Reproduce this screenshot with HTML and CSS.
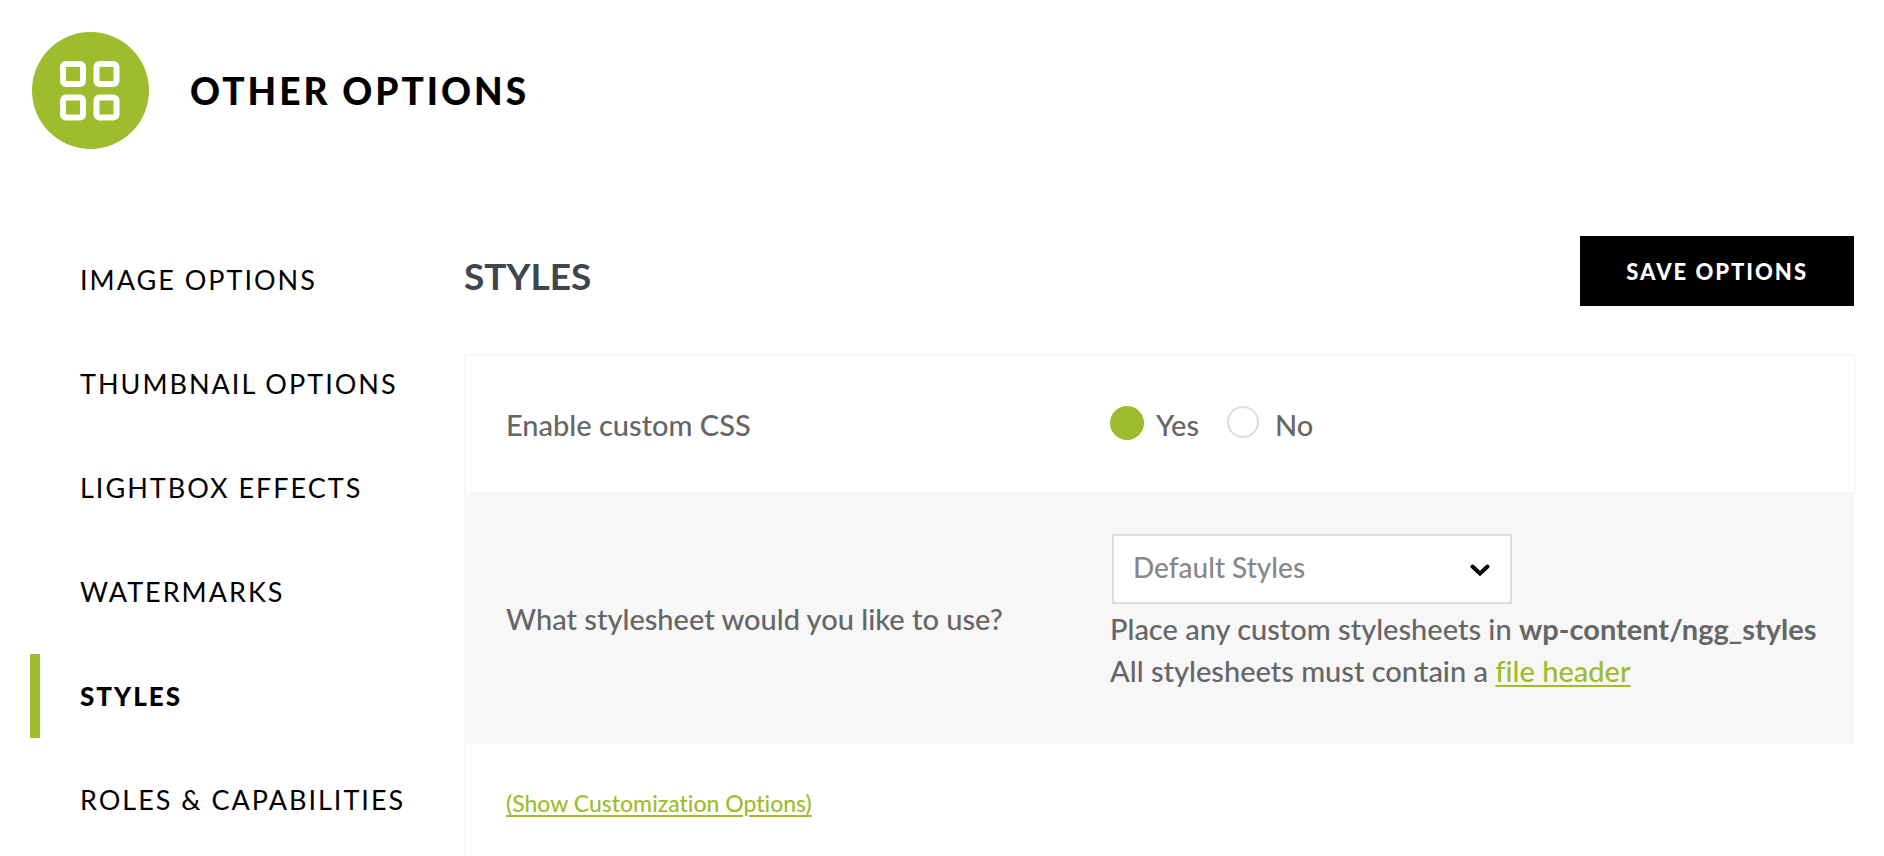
FILE: index.html
```
<!DOCTYPE html>
<html lang="en">
<head>
    <meta charset="UTF-8">
    <meta name="viewport" content="width=device-width, initial-scale=1.0">
    <title>Other Options</title>
    <link rel="stylesheet" href="styles.css">
</head>
<body>

    <header class="page-header">
        <svg class="page-icon" viewBox="0 0 117 117" aria-hidden="true">
            <circle cx="58.5" cy="58.5" r="58.5" fill="#9fbb2e"/>
            <g fill="none" stroke="#fff" stroke-width="6">
                <rect x="31" y="32" width="20" height="20" rx="3"/>
                <rect x="64.5" y="32" width="20" height="20" rx="3"/>
                <rect x="31" y="65.5" width="20" height="20" rx="3"/>
                <rect x="64.5" y="65.5" width="20" height="20" rx="3"/>
            </g>
        </svg>
        <h1>Other Options</h1>
    </header>

    <div class="page-body">
        <nav class="side-nav">
            <a href="#image">Image Options</a>
            <a href="#thumbnail">Thumbnail Options</a>
            <a href="#lightbox">Lightbox Effects</a>
            <a href="#watermarks">Watermarks</a>
            <a href="#styles" class="active">Styles</a>
            <a href="#roles">Roles &amp; Capabilities</a>
        </nav>

        <main>
            <form>
                <div class="section-header">
                    <h2>Styles</h2>
                    <button type="submit" class="save-button">Save Options</button>
                </div>

                <table class="options-table">
                    <tr class="radio-row">
                        <td class="label-cell" id="enableLabel">Enable custom CSS</td>
                        <td>
                            <div class="radio-group" role="radiogroup" aria-labelledby="enableLabel">
                                <input type="radio" name="activateCSS" id="cssYes" value="1" checked>
                                <label for="cssYes">Yes</label>
                                <input type="radio" name="activateCSS" id="cssNo" value="0">
                                <label for="cssNo">No</label>
                            </div>
                        </td>
                    </tr>
                    <tr class="shaded">
                        <td class="label-cell"><label for="stylesheet">What stylesheet would you like to use?</label></td>
                        <td>
                            <div class="select-wrap">
                                <select id="stylesheet">
                                    <option>Default Styles</option>
                                </select>
                                <svg class="chevron" viewBox="0 0 20 12" aria-hidden="true">
                                    <path d="M2.5 2.5 L10 9.5 L17.5 2.5" fill="none" stroke="#000" stroke-width="4" stroke-linecap="round"/>
                                </svg>
                            </div>
                            <p class="description">
                                Place any custom stylesheets in <strong>wp-content/ngg_styles</strong><br>
                                All stylesheets must contain a <a href="#header">file header</a>
                            </p>
                        </td>
                    </tr>
                    <tr class="more-row">
                        <td colspan="2"><a href="#customize">(Show Customization Options)</a></td>
                    </tr>
                </table>
            </form>
        </main>
    </div>

</body>
</html>
```

FILE: styles.css
```
:root {
    --green: #9fbb2e;
    --text: #666666;
    --heading: #40464d;
    --line: #f8f8f3;
    --field-border: #dddddd;
}

* {
    box-sizing: border-box;
}

body {
    font-family: Lato, sans-serif;
    font-size: 29px;
    font-weight: 500;
    font-variant-ligatures: none;
    line-height: 42px;
    color: var(--text);
    background-color: #ffffff;
    margin: 0;
    padding: 32px 30px 0;
}

a {
    color: var(--green);
    text-underline-offset: 3px;
    text-decoration-thickness: 2px;
}

/* Header */
.page-header {
    display: flex;
    align-items: center;
    gap: 41px;
    padding-left: 2px;
    margin-bottom: 87px;
}

.page-icon {
    width: 117px;
    height: 117px;
}

h1 {
    margin: 0;
    font-size: 37px;
    font-weight: 900;
    letter-spacing: 3px;
    text-transform: uppercase;
    color: #000000;
}

.page-body {
    display: flex;
}

/* Left menu */
.side-nav {
    flex: 0 0 434px;
    display: flex;
    flex-direction: column;
    gap: 20px;
    padding-top: 2px;
}

.side-nav a {
    padding: 21px 0 21px 40px;
    border-left: 10px solid transparent;
    font-size: 27px;
    font-weight: 400;
    letter-spacing: 2px;
    text-transform: uppercase;
    text-decoration: none;
    color: #000000;
}

.side-nav a.active {
    border-color: var(--green);
    font-size: 26px;
    font-weight: 900;
}

main {
    flex: 1;
}

.section-header {
    display: flex;
    justify-content: space-between;
    margin-bottom: 48px;
}

h2 {
    margin: 19px 0 0;
    font-size: 37px;
    font-weight: 700;
    text-transform: uppercase;
    color: var(--heading);
}

.save-button {
    height: 70px;
    padding: 0 46px;
    border: none;
    background-color: #000000;
    color: #ffffff;
    font-family: inherit;
    font-size: 22px;
    font-weight: 900;
    letter-spacing: 2px;
    text-transform: uppercase;
    cursor: pointer;
}

/* Options */
.options-table {
    width: 100%;
    border-collapse: separate;
    border-spacing: 0;
    border-left: 2px solid var(--line);
    border-top: 2px solid var(--line);
}

.options-table td {
    padding: 40px 20px 40px 40px;
    border-bottom: 2px solid var(--line);
    vertical-align: middle;
}

.options-table .label-cell {
    width: 604px;
    padding-top: 42px;
}

.radio-row td {
    height: 138px;
}

.radio-row td:last-child {
    box-shadow: 2px 0 0 var(--line);
}

.shaded {
    background-color: #f7f7f7;
}

.radio-group {
    display: flex;
    align-items: center;
    padding-top: 2px;
}

.radio-group input {
    appearance: none;
    width: 32px;
    height: 32px;
    margin: 0 16px 6px 0;
    border: 2px solid var(--field-border);
    border-radius: 50%;
    background-color: #ffffff;
}

.radio-group input:checked {
    width: 34px;
    height: 34px;
    margin-right: 12px;
    margin-bottom: 4px;
    border-color: var(--green);
    background-color: var(--green);
}

.radio-group label {
    margin-right: 28px;
}

.select-wrap {
    position: relative;
    width: 400px;
    margin-left: 2px;
}

select {
    appearance: none;
    display: block;
    width: 100%;
    height: 70px;
    padding: 0 60px 4px 19px;
    border: 2px solid var(--field-border);
    border-radius: 0;
    background-color: #ffffff;
    color: #888888;
    font-family: inherit;
    font-size: 28px;
    font-weight: 500;
}

.chevron {
    position: absolute;
    right: 22px;
    top: 30px;
    width: 20px;
    height: 12px;
    pointer-events: none;
}

.description {
    margin: 4px 0 10px;
}

.options-table .more-row td {
    padding: 38px 40px 40px;
    border-bottom: none;
    font-size: 23px;
}
```
